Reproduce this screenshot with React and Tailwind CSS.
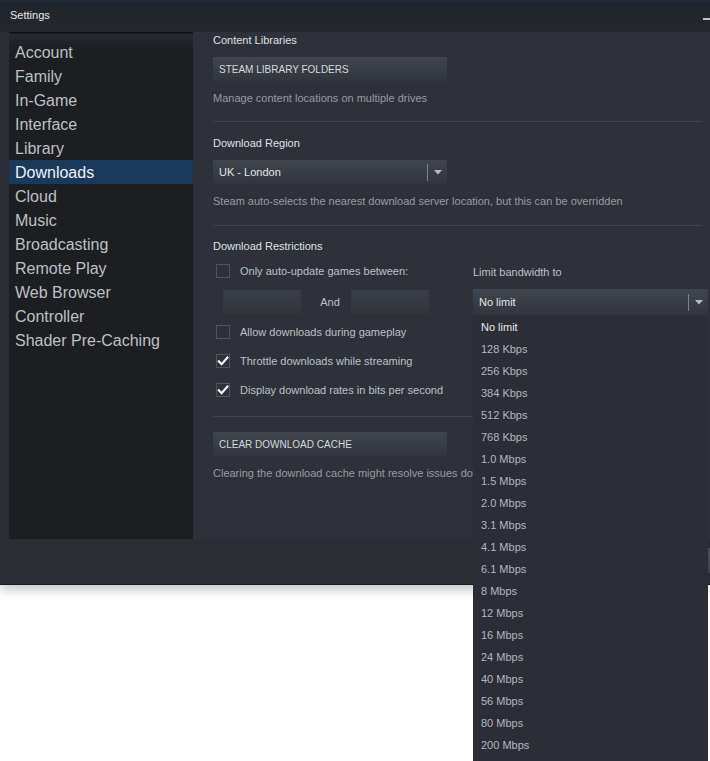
import React from "react";

const navItems = [
  "Account",
  "Family",
  "In-Game",
  "Interface",
  "Library",
  "Downloads",
  "Cloud",
  "Music",
  "Broadcasting",
  "Remote Play",
  "Web Browser",
  "Controller",
  "Shader Pre-Caching",
];

const rates = [
  "No limit",
  "128 Kbps",
  "256 Kbps",
  "384 Kbps",
  "512 Kbps",
  "768 Kbps",
  "1.0 Mbps",
  "1.5 Mbps",
  "2.0 Mbps",
  "3.1 Mbps",
  "4.1 Mbps",
  "6.1 Mbps",
  "8 Mbps",
  "12 Mbps",
  "16 Mbps",
  "24 Mbps",
  "40 Mbps",
  "56 Mbps",
  "80 Mbps",
  "200 Mbps",
];

function Arrow() {
  return (
    <svg width="8" height="5" viewBox="0 0 8 5" className="block">
      <path d="M0 0 H8 L4 4.5 Z" fill="#b9bdc2" />
    </svg>
  );
}

function Checkbox({ checked }) {
  return (
    <div className="w-[14px] h-[14px] border border-[#50555d] flex items-center justify-center shrink-0">
      {checked && (
        <svg width="12" height="12" viewBox="0 0 12 12">
          <path
            d="M1.8 6.2 L4.6 9.2 L10.4 2.6"
            fill="none"
            stroke="#f2f2f2"
            strokeWidth="2.2"
            strokeLinecap="square"
          />
        </svg>
      )}
    </div>
  );
}

function CheckRow({ checked, label, className = "" }) {
  return (
    <div className={`flex items-center h-[16px] ${className}`}>
      <div className="w-[27px] pl-[3px]">
        <Checkbox checked={checked} />
      </div>
      <span className="text-[11px] text-[#bcc1c6] leading-[16px] whitespace-nowrap">{label}</span>
    </div>
  );
}

function Button({ children }) {
  return (
    <div className="w-[234px] h-[24px] bg-gradient-to-b from-[#40454e] to-[#31353d] flex items-center pl-[6px] text-[10px] text-[#d6d9dc]">
      {children}
    </div>
  );
}

function Select({ value, width, height }) {
  return (
    <div
      className={`${width} ${height} bg-gradient-to-b from-[#40454e] to-[#31353d] flex items-center pl-[6px] text-[11px] text-[#e4e6e8]`}
    >
      <span className="flex-1">{value}</span>
      <div className="w-px h-[17px] bg-[#7e838a]" />
      <div className="w-[19px] flex justify-center">
        <Arrow />
      </div>
    </div>
  );
}

function Separator({ className = "" }) {
  return <div className={`h-px bg-[#3f434a] ${className}`} />;
}

export default function App() {
  return (
    <div className="relative w-[710px] h-[761px] bg-white overflow-hidden font-['Liberation_Sans',Arial,sans-serif]">
      {/* settings window */}
      <div className="h-[585px] bg-[#2a2d33] border-t border-[#1b2b45] border-b border-b-[#151b33] shadow-[0_5px_10px_rgba(0,0,0,0.22)] flex flex-col">
        {/* title bar */}
        <div className="h-[31px] bg-gradient-to-b from-[#20242b] to-[#24272e] flex items-center justify-between pl-[10px] shrink-0">
          <span className="text-[11px] text-[#e8eaec] leading-none -mt-[2px]">Settings</span>
          <div className="w-[7px] h-[2px] bg-[#bfc2c6] mt-[5px]" />
        </div>

        {/* body */}
        <div className="flex h-[507px] pl-[9px] shrink-0">
          {/* sidebar */}
          <div className="w-[184px] shrink-0 bg-[linear-gradient(to_bottom,#0f1114_0px,#0f1114_1px,#262930_2px,#23262c_7px,#1e2025_14px,#1c1e22_24px)] pt-[8px]">
            {navItems.map((item) => (
              <div
                key={item}
                className={`h-[24px] flex items-center pl-[6px] pt-[2px] text-[16px] leading-none ${
                  item === "Downloads" ? "bg-[#1b3a5b] text-[#eef1f4]" : "text-[#bcc0c4]"
                }`}
              >
                {item}
              </div>
            ))}
          </div>

          {/* content panel */}
          <div className="flex-1 min-w-0 bg-[#2e3139] pl-[20px] pr-[8px]">
            <div className="h-[16px] leading-[16px] text-[11px] text-[#dfe1e3]">Content Libraries</div>
            <div className="mt-[9px]">
              <Button>STEAM LIBRARY FOLDERS</Button>
            </div>
            <div className="mt-[9px] h-[16px] leading-[16px] text-[11px] text-[#959ba2]">
              Manage content locations on multiple drives
            </div>
            <Separator className="mt-[15px]" />

            <div className="mt-[13px] h-[16px] leading-[16px] text-[11px] text-[#dfe1e3]">Download Region</div>
            <div className="mt-[9px]">
              <Select value="UK - London" width="w-[234px]" height="h-[24px]" />
            </div>
            <div className="mt-[9px] h-[16px] leading-[16px] text-[11px] text-[#959ba2] whitespace-nowrap">
              Steam auto-selects the nearest download server location, but this can be overridden
            </div>
            <Separator className="mt-[16px]" />

            <div className="mt-[12px] h-[16px] leading-[16px] text-[11px] text-[#dfe1e3]">Download Restrictions</div>

            <div className="flex mt-[9px]">
              {/* left column */}
              <div className="w-[260px] shrink-0">
                <CheckRow label="Only auto-update games between:" />
                <div className="flex items-center mt-[11px] pl-[10px]">
                  <div className="w-[78px] h-[24px] bg-gradient-to-b from-[#3b4048] to-[#30343b]" />
                  <span className="w-[50px] pl-[8px] text-center text-[11px] text-[#bcc1c6]">And</span>
                  <div className="w-[78px] h-[24px] bg-gradient-to-b from-[#3b4048] to-[#30343b]" />
                </div>
                <CheckRow label="Allow downloads during gameplay" className="mt-[10px]" />
                <CheckRow checked label="Throttle downloads while streaming" className="mt-[13px]" />
                <CheckRow checked label="Display download rates in bits per second" className="mt-[13px]" />
              </div>

              {/* right column */}
              <div className="w-[235px] shrink-0">
                <div className="h-[16px] leading-[16px] text-[11px] text-[#bcc1c6] mt-px">Limit bandwidth to</div>
                <div className="mt-[9px]">
                  <Select value="No limit" width="w-[235px]" height="h-[26px]" />
                </div>
              </div>
            </div>

            <Separator className="mt-[18px]" />
            <div className="mt-[15px]">
              <Button>CLEAR DOWNLOAD CACHE</Button>
            </div>
            <div className="mt-[9px] w-[260px] h-[16px] leading-[16px] text-[11px] text-[#959ba2] whitespace-nowrap overflow-hidden">
              Clearing the download cache might resolve issues downloading or starting apps
            </div>
          </div>
        </div>

        {/* footer */}
        <div className="flex-1 flex justify-end items-start pt-[9px]">
          <div className="w-[80px] h-[25px] bg-gradient-to-b from-[#4a4f58] to-[#3c4048] -mr-[40px]" />
        </div>
      </div>

      {/* open bandwidth list */}
      <div className="absolute left-[473px] top-[315px] w-[235px] bottom-0 bg-[#2b2e36] pt-[1px]">
        {rates.map((r, i) => (
          <div
            key={r}
            className={`h-[22px] flex items-center pl-[8px] text-[11px] ${
              i === 0 ? "text-[#e6e9ec]" : "text-[#b2b8bf]"
            }`}
          >
            {r}
          </div>
        ))}
      </div>
    </div>
  );
}
